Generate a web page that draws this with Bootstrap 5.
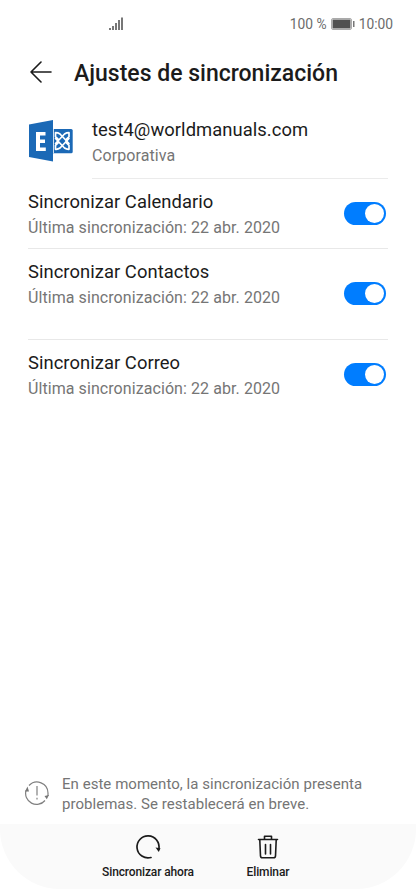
<!DOCTYPE html>
<html lang="es">
<head>
<meta charset="utf-8">
<meta name="viewport" content="width=device-width, initial-scale=1">
<title>Ajustes de sincronización</title>
<link href="https://cdn.jsdelivr.net/npm/bootstrap@5.3.0/dist/css/bootstrap.min.css" rel="stylesheet">
<style>
body{font-family:Roboto,"Liberation Sans",sans-serif;color:#1b1b1b;background:#fff}
svg{display:block;flex:none}
.screen{height:889px;width:416px}
.status{height:48px;padding:0 23px 0 109px;color:#6c6c6c;font-size:13.8px;line-height:20px}
.topbar{height:49px;padding-left:30px;gap:22px}
.topbar svg{margin-bottom:2px}
.topbar h1{font-size:23px;font-weight:500;line-height:30px;padding-top:2px}
.account{height:82px;padding-left:28px;padding-right:28px;gap:19px}
.account>svg{margin-top:23px}
.account-text{padding-top:20px;border-bottom:1px solid #ebebeb}
.name{font-size:18.4px;letter-spacing:.05px;line-height:26px;white-space:nowrap}
.sub{font-size:16px;letter-spacing:.075px;line-height:26px;color:#757575;white-space:nowrap}
.sync{margin:0 28px;border-bottom:1px solid #e8e8e8;padding-top:10px;padding-right:2px}
.sync-a{height:70px}.sync-b{height:91px}.sync-c{height:80px;border:0}
.toggle{width:42px;height:23px;border-radius:12px;background:#007dff;padding-right:2px}
.toggle i{width:19px;height:19px;background:#fff}
.sync .toggle{margin-top:13px}
.sync-b .toggle{margin-top:23px}
.notice{padding-left:24px;gap:12px;height:50px;font-size:15px;letter-spacing:.04px;line-height:20px;color:#757575;white-space:nowrap}
.notice svg{margin-top:6px}
.actions{height:65px;background:#fafafa;border-radius:0 0 60px 60px;padding-left:88px}
.action{width:120px;padding-top:10px;font-size:12px;letter-spacing:-.13px;font-weight:500;line-height:16px;white-space:nowrap}
.action svg{margin-bottom:4px}
</style>
<script src="https://cdn.jsdelivr.net/npm/bootstrap@5.3.0/dist/js/bootstrap.bundle.min.js"></script>
</head>
<body>
<main class="screen d-flex flex-column overflow-hidden">
  <div class="status d-flex align-items-center justify-content-between">
    <svg width="15" height="14" viewBox="0 0 15 14" fill="#777"><path d="M0 11h2v2H0zM3 9h2v4H3zM6 6h2v7H6zM9 3h2v10H9zM12 .5h2V13h-2z"/></svg>
    <div class="d-flex align-items-center">
      <span>100 %</span>
      <svg class="ms-1 me-1" width="24" height="12" viewBox="0 0 24 12"><rect x=".5" y=".5" width="20" height="11" rx="1.500" fill="#fff" stroke="#aaa"/><path fill="#505050" d="M1.500 1.500h18v9h-18z"/><path fill="#777" d="M22 3h1.500v6H22z"/></svg>
      <span>10:00</span>
    </div>
  </div>
  <header class="topbar d-flex align-items-center">
    <svg width="22" height="22" viewBox="0 0 22 22" fill="none" stroke="#1b1b1b" stroke-width="1.600" stroke-linecap="round" stroke-linejoin="round"><path d="M11 1 1 11l10 10M1 11h20"/></svg>
    <h1 class="mb-0 text-nowrap">Ajustes de sincronización</h1>
  </header>
  <section class="account d-flex">
    <svg width="45" height="42" viewBox="0 0 45 42"><rect x="20" y="9" width="24.700" height="24.300" rx="1.500" fill="#1b69b6"/><g fill="none" stroke="#fff" stroke-width="1.700" stroke-linecap="round" stroke-linejoin="round"><path d="m27.500 18.500 9 9.500q2 1.500 4.500 1.300v-4l-3-3M41 23.500 32 14q-2-1.300-4.500-1.300v4l3 3"/><path d="M41 18.500 32 28q-2 1.500-4.500 1.300v-4l3-3M27.500 23.500l9-9.500q2-1.300 4.500-1.300v4l-3 3"/></g><path fill="#fff" d="M25 9h.8v24H25z"/><path fill="#1b69b6" d="M1 4.500 25 0v41.500L1 37z"/><path fill="#fff" d="M8 12h9.500v3.500H12v4h5V23h-5v4.500h5.800V31H8z"/></svg>
    <div class="account-text flex-grow-1">
      <div class="name">test4@worldmanuals.com</div>
      <div class="sub">Corporativa</div>
    </div>
  </section>
  <section class="sync sync-a d-flex justify-content-between align-items-start">
    <div><div class="name">Sincronizar Calendario</div><div class="sub">Última sincronización: 22 abr. 2020</div></div>
    <div class="toggle d-flex align-items-center justify-content-end" role="switch" aria-checked="true"><i class="rounded-circle"></i></div>
  </section>
  <section class="sync sync-b d-flex justify-content-between align-items-start">
    <div><div class="name">Sincronizar Contactos</div><div class="sub">Última sincronización: 22 abr. 2020</div></div>
    <div class="toggle d-flex align-items-center justify-content-end" role="switch" aria-checked="true"><i class="rounded-circle"></i></div>
  </section>
  <section class="sync sync-c d-flex justify-content-between align-items-start">
    <div><div class="name">Sincronizar Correo</div><div class="sub">Última sincronización: 22 abr. 2020</div></div>
    <div class="toggle d-flex align-items-center justify-content-end" role="switch" aria-checked="true"><i class="rounded-circle"></i></div>
  </section>
  <section class="notice d-flex mt-auto">
    <svg width="26" height="26" viewBox="0 0 26 26" fill="none" stroke="#808080" stroke-width="1.200"><path d="M5 5.500A11 11 0 0 1 24 13v3M2 10.500A11 11 0 0 0 21 20.500"/><path d="M13 6v9.500M13 17.800v1.700"/><path fill="#777" stroke="none" d="M3.500 6.500 5 11.500H1zM25 15l-2.200 4.200L20.500 16z"/></svg>
    <div>En este momento, la sincronización presenta<br>problemas. Se restablecerá en breve.</div>
  </section>
  <nav class="actions d-flex">
    <div class="action d-flex flex-column align-items-center">
      <svg width="26" height="26" viewBox="0 0 26 26" fill="none" stroke="#1b1b1b" stroke-width="1.700" stroke-linecap="round"><path d="M16 23.500A11 11 0 1 1 23.800 15"/><path fill="#1b1b1b" stroke="none" d="m20.500 13.500 5 .7-1.700 3.800z"/></svg>
      <span>Sincronizar ahora</span>
    </div>
    <div class="action d-flex flex-column align-items-center">
      <svg width="26" height="26" viewBox="0 0 26 26" fill="none" stroke="#1b1b1b" stroke-width="1.600" stroke-linecap="round" stroke-linejoin="round"><path d="M3.500 5.500h19M9.500 5V2.200h7V5M4.800 6l.7 16q.1 1.800 2 1.800h11q1.900 0 2-1.800l.7-16M10.500 10.500v9.500M15.500 10.500v9.500"/></svg>
      <span>Eliminar</span>
    </div>
  </nav>
</main>
</body>
</html>
